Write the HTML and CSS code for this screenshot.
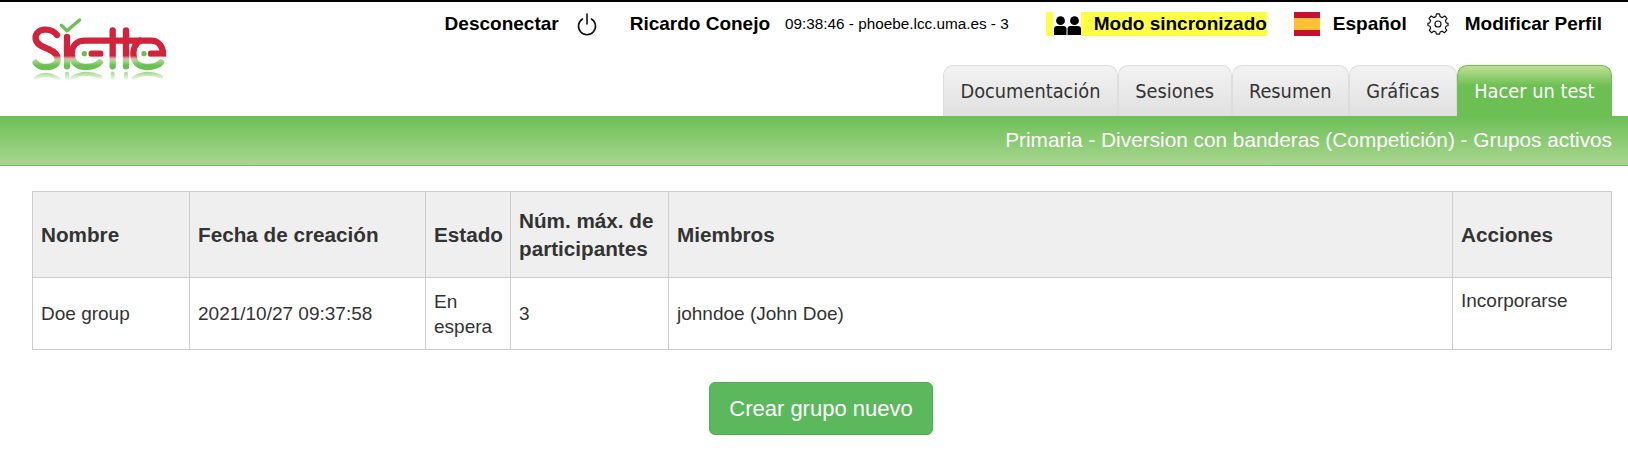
FILE: index.html
```html
<!DOCTYPE html>
<html lang="es">
<head>
  <meta charset="UTF-8" />
  <title>Siette - Grupos activos</title>
  <link rel="stylesheet" href="styles.css">
</head>
<body>
  <header class="header">
    <a class="logo" href="#" aria-label="Siette">
      <svg width="150" height="70" viewBox="0 0 450 210">
        <defs>
          <linearGradient id="logo-grad" gradientUnits="userSpaceOnUse" x1="0" y1="0" x2="0" y2="210">
            <stop offset="0.58" stop-color="#d2233c"/>
            <stop offset="0.62" stop-color="#eba7a0"/>
            <stop offset="0.65" stop-color="#a5da8e"/>
            <stop offset="0.72" stop-color="#6cbf52"/>
          </linearGradient>
          <linearGradient id="logo-fade" gradientUnits="userSpaceOnUse" x1="0" y1="170" x2="0" y2="198">
            <stop offset="0" stop-color="#9fd68b"/>
            <stop offset="1" stop-color="#fff"/>
          </linearGradient>
        </defs>
        <g fill="none" stroke="url(#logo-fade)" stroke-width="12" stroke-linecap="round">
          <path d="M32 190 Q60 168 100 192"/>
          <path d="M126 176 V194"/>
          <path d="M140 190 Q178 165 226 186"/>
          <path d="M263 176 V194"/>
          <path d="M303 176 V194"/>
          <path d="M325 190 Q365 165 408 186"/>
        </g>
        <g fill="none" stroke="url(#logo-grad)" stroke-width="19" stroke-linecap="round">
          <path d="M96 60 C85 46 72 43 58 44 C38 45 30 60 32 72 C35 90 55 96 70 102 C88 110 98 120 98 132 C98 148 85 156 62 156 C50 156 40 153 32 143"/>
          <path d="M126 66 V154"/>
          <path d="M224 142 C214 154 198 156 180 156 C156 156 140 140 140 116 C140 92 156 77 180 77 H378 C402 77 414 96 414 116 H378"/>
          <path d="M226 116 H200"/>
          <path d="M263 46 V154"/>
          <path d="M303 46 V154"/>
          <path d="M408 142 C398 154 385 156 366 156 C340 156 325 140 325 116 C325 98 333 84 345 77"/>
        </g>
        <circle cx="178" cy="116" r="8" fill="#6cbf52"/>
        <circle cx="357" cy="116" r="8" fill="#6cbf52"/>
        <path d="M109 31 L126 47 L164 15" fill="none" stroke="#6cbf52" stroke-width="10" stroke-linecap="round" stroke-linejoin="round"/>
      </svg>
    </a>
    <div class="header-right">
      <nav class="topbar">
        <a class="topbar-link" href="#">Desconectar</a>
        <svg class="icon-power" width="20" height="24" viewBox="0 0 20 24">
          <path d="M10 2 V12" fill="none" stroke="#111" stroke-width="1.6" stroke-linecap="round"/>
          <path d="M5.500 7 A8.500 8.500 0 1 0 14.500 7" fill="none" stroke="#111" stroke-width="1.6" stroke-linecap="round"/>
        </svg>
        <span class="user-name">Ricardo Conejo</span>
        <span class="server-info">09:38:46 - phoebe.lcc.uma.es - 3</span>
        <span class="sync-mode">
          <svg class="icon-people" width="28" height="24" viewBox="0 0 28 24">
            <circle cx="7.500" cy="8.700" r="4.400" fill="#000"/>
            <circle cx="21.500" cy="8.700" r="4.400" fill="#000"/>
            <path d="M1 23 V17 Q1 14 4 14 H10.500 Q13.500 14 13.500 17 V23 Z" fill="#000"/>
            <path d="M14.500 23 V17 Q14.500 14 17.500 14 H24.500 Q28 14 28 17 V23 Z" fill="#000"/>
          </svg>
          Modo sincronizado
        </span>
        <span class="flag-es"></span>
        <a class="topbar-link" href="#">Español</a>
        <svg class="icon-gear" width="22" height="24" viewBox="0 0 24 24" fill="none" stroke="#111" stroke-width="1.3" stroke-linejoin="round">
          <circle cx="12" cy="12" r="3.300"/>
          <path d="M10.300 1 H13.700 L14.300 4 L16.800 5 L19.400 3.300 L21.800 5.800 L20 8.300 L21 10.700 L23 11.300 V13.700 L20.800 14.500 L20 16.500 L21.500 19 L19 21.500 L16.600 19.800 L14.300 20.800 L13.700 23 H10.300 L9.700 20.800 L7.300 19.800 L5 21.500 L2.500 19 L4 16.500 L3.200 14.500 L1 13.700 V11.300 L3 10.700 L4 8.300 L2.200 5.800 L4.600 3.300 L7.200 5 L9.700 4 Z"/>
        </svg>
        <a class="topbar-link" href="#">Modificar Perfil</a>
      </nav>
      <ul class="tabs">
        <li class="tab"><a href="#">Documentación</a></li>
        <li class="tab"><a href="#">Sesiones</a></li>
        <li class="tab"><a href="#">Resumen</a></li>
        <li class="tab"><a href="#">Gráficas</a></li>
        <li class="tab active"><a href="#">Hacer un test</a></li>
      </ul>
    </div>
  </header>

  <div class="breadcrumb">Primaria - Diversion con banderas (Competición) - Grupos activos</div>

  <main class="content">
    <table class="groups">
      <thead>
        <tr>
          <th class="col-name">Nombre</th>
          <th class="col-date">Fecha de creación</th>
          <th class="col-state">Estado</th>
          <th class="col-max">Núm. máx. de participantes</th>
          <th>Miembros</th>
          <th class="col-actions">Acciones</th>
        </tr>
      </thead>
      <tbody>
        <tr>
          <td>Doe group</td>
          <td>2021/10/27 09:37:58</td>
          <td>En espera</td>
          <td>3</td>
          <td>johndoe (John Doe)</td>
          <td class="cell-top"><a href="#">Incorporarse</a></td>
        </tr>
      </tbody>
    </table>
    <div class="actions">
      <button type="button" class="btn-create">Crear grupo nuevo</button>
    </div>
  </main>
</body>
</html>
```

FILE: styles.css
```css
* {
  box-sizing: border-box;
}
body {
  margin: 0;
  background-color: #fff;
  border-top: 2px solid #000;
  font-family: "Liberation Sans", Arial, sans-serif;
  font-size: 16px;
  color: #333;
}
a {
  color: inherit;
  text-decoration: none;
}
.header {
  display: flex;
  justify-content: space-between;
  height: 114px;
}
.logo {
  display: block;
  height: 70px;
  padding: 13px 0 0 25px;
}
.logo svg {
  display: block;
}
.header-right {
  display: flex;
  flex-direction: column;
  align-items: flex-end;
  justify-content: space-between;
}
.topbar {
  display: flex;
  align-items: center;
  margin-top: 10px;
  padding-right: 26px;
  height: 24px;
  color: #000;
  font-weight: bold;
  font-size: 19px;
}
.icon-power {
  margin-left: 18px;
}
.user-name {
  margin-left: 33px;
}
.server-info {
  margin-left: 15px;
  font-size: 15.3px;
  font-weight: normal;
}
.sync-mode {
  display: flex;
  align-items: center;
  gap: 13px;
  margin-left: 37px;
  padding-left: 7px;
  height: 24px;
  background-color: #ffff44;
}
.icon-people {
  background-color: #fff;
}
.flag-es {
  width: 26px;
  height: 24px;
  margin-left: 27px;
  margin-right: 13px;
  background: linear-gradient(#c8102e 25%, #ffc133 25%, #ffc133 75%, #c8102e 75%);
}
.icon-gear {
  margin-left: 20px;
  margin-right: 16px;
}
.tabs {
  display: flex;
  margin: 0;
  padding: 0 16px 0 0;
  list-style: none;
}
.tab {
  height: 51px;
  padding: 0 16.4px;
  border: 1px solid #ddd;
  border-bottom: none;
  border-radius: 10px 10px 0 0;
  background: linear-gradient(#f3f3f3, #e0e0e0);
  color: #333;
  font-family: "DejaVu Sans Condensed", "DejaVu Sans", sans-serif;
  font-size: 19.8px;
  line-height: 51px;
}
.tab.active {
  border-color: #6cbf52;
  background: linear-gradient(#bfe095, #6cbf52 40%);
  color: #fff;
}
.breadcrumb {
  height: 50px;
  padding: 11px 16px 0 0;
  border-bottom: 1px solid #6cbf52;
  background: linear-gradient(#6cbf55, #a9d690);
  color: #fff;
  font-size: 20.8px;
  line-height: 26px;
  text-align: right;
}
.content {
  padding: 25px 16px 0 32px;
}
.groups {
  width: 100%;
  border-collapse: collapse;
  table-layout: fixed;
  font-size: 19px;
  line-height: 25px;
}
.groups th,
.groups td {
  padding: 8px;
  border: 1px solid #ccc;
  text-align: left;
}
.groups th {
  height: 86px;
  padding-top: 9px;
  background-color: #efefef;
  font-size: 20.7px;
  line-height: 28px;
}
.groups td {
  height: 72px;
}
.groups .cell-top {
  vertical-align: top;
  padding-top: 10px;
}
.col-name { width: 157px; }
.col-date { width: 236px; }
.col-state { width: 85px; }
.col-max { width: 158px; }
.col-actions { width: 159px; }
.actions {
  display: flex;
  justify-content: center;
  margin-top: 32px;
  padding-right: 2px;
}
.btn-create {
  width: 224px;
  height: 53px;
  border: 1px solid #4cae4c;
  border-radius: 6px;
  background-color: #5cb85c;
  color: #fff;
  font-family: inherit;
  font-size: 22px;
  cursor: pointer;
}
```
